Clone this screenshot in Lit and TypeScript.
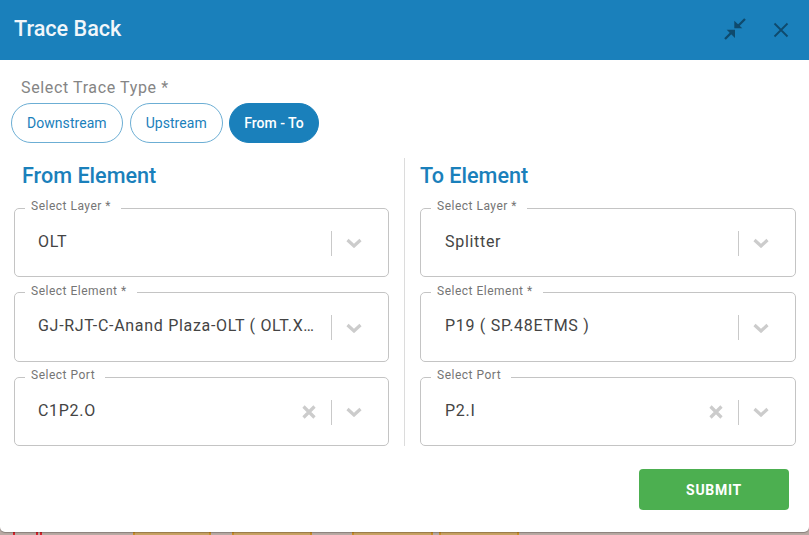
import { LitElement, html, svg, css, nothing } from "lit";
import { customElement } from "lit/decorators.js";

interface Field { label: string; value: string; clear?: boolean; }

const FROM: Field[] = [
  { label: "Select Layer *", value: "OLT" },
  { label: "Select Element *", value: "GJ-RJT-C-Anand Plaza-OLT ( OLT.XGSPON0123 )" },
  { label: "Select Port", value: "C1P2.O", clear: true },
];
const TO: Field[] = [
  { label: "Select Layer *", value: "Splitter" },
  { label: "Select Element *", value: "P19 ( SP.48ETMS )" },
  { label: "Select Port", value: "P2.I", clear: true },
];

const BLOCKS = [[133, 211], [232, 312], [352, 433], [439, 519]];

@customElement("app-root")
export class AppRoot extends LitElement {
  static styles = css`
    :host {
      display: block;
      width: 809px;
      height: 535px;
      overflow: hidden;
      position: relative;
      background: #b9aaa4;
      font-family: Roboto, "Liberation Sans", sans-serif;
    }
    .map { position: absolute; left: 0; right: 0; bottom: 0; height: 3px; display: block; }
    .dialog {
      position: relative;
      height: 532px;
      box-sizing: border-box;
      background: #fff;
      border-radius: 0 0 5px 5px;
      display: flex;
      flex-direction: column;
      box-shadow: 0 1px 1px rgba(0,0,0,.25);
    }
    .head {
      height: 60px;
      flex: none;
      background: #1a80bb;
      display: flex;
      align-items: center;
      padding: 0 20px 0 14px;
    }
    .title { flex: 1; color: #f1f6fa; font-size: 21.6px; font-weight: 500; position: relative; top: -2px; }
    .head svg { display: block; }
    .compress { margin-right: 26px; position: relative; top: -1px; }
    .type-label {
      margin: 18px 0 0 21px;
      font-size: 16px;
      line-height: 19px;
      letter-spacing: .63px;
      color: #858585;
    }
    .pills { display: flex; gap: 7px; margin: 6px 0 0 11px; }
    .pill {
      box-sizing: border-box;
      height: 40px;
      border-radius: 20px;
      border: 1px solid #6caed4;
      background: #fff;
      color: #1a80bb;
      font: 400 14px Roboto, sans-serif;
      letter-spacing: .05px;
      padding: 0 15px;
    }
    .pill.on {
      background: #1a80bb;
      border-color: #1a80bb;
      color: #fff;
      font-weight: 500;
      letter-spacing: 0;
      padding: 0 14.5px;
      margin-left: -1px;
    }
    .cols { display: flex; margin-top: 15px; padding: 0 13px 0 14px; }
    .col { width: 375px; flex: none; }
    .col.right { width: 376px; }
    .rule { width: 1px; background: #dcdcdc; margin: 0 15px; flex: none; height: 288px; }
    .col-title {
      margin: 5px 0 0 8px;
      font-size: 21.6px;
      line-height: 25px;
      font-weight: 500;
      color: #1a80bb;
    }
    .right .col-title { margin-left: 0; }
    .fields { display: flex; flex-direction: column; gap: 8.5px; margin-top: 13px; }
    .field {
      margin: 0;
      min-width: 0;
      box-sizing: border-box;
      height: 76px;
      padding: 0;
      border: 1px solid #c4c4c4;
      border-radius: 5px;
    }
    .field legend {
      margin-left: 10px;
      padding: 0 10px 0 6px;
      font-size: 12px;
      line-height: 14px;
      letter-spacing: .5px;
      color: #757575;
      position: relative;
      top: -2px;
    }
    .inner { display: flex; align-items: center; height: 56px; padding: 0 0 0 23px; }
    .right .inner { padding-left: 24px; }
    .value {
      flex: 1;
      min-width: 0;
      margin-right: 14px;
      white-space: nowrap;
      overflow: hidden;
      text-overflow: ellipsis;
      font-size: 16px;
      letter-spacing: .7px;
      color: #444;
      position: relative;
      top: -2px;
    }
    .x { margin-right: 15px; flex: none; }
    .sep { width: 1px; height: 25px; background: #c9c9c9; flex: none; }
    .chev { flex: none; margin: 0 26px 0 14px; }
    .foot { display: flex; justify-content: flex-end; padding: 23px 20px 0 0; }
    .submit {
      width: 150px;
      height: 41px;
      border: 0;
      border-radius: 4px;
      background: #4caf50;
      color: #fff;
      font: 700 14px Roboto, sans-serif;
      letter-spacing: .7px;
    }
  `;

  private field(f: Field) {
    return html`<fieldset class="field">
      <legend>${f.label}</legend>
      <div class="inner">
        <div class="value">${f.value}</div>
        ${f.clear
          ? html`<svg class="x" width="14" height="14" viewBox="0 0 14 14"><path d="M1.500 1.500l11 11M12.500 1.500l-11 11" stroke="#cccccc" stroke-width="3.200" fill="none"/></svg>`
          : nothing}
        <div class="sep"></div>
        <svg class="chev" width="16" height="10" viewBox="0 0 16 10"><path d="M1.500 2l6.500 6 6.500-6" stroke="#cccccc" stroke-width="3.200" fill="none"/></svg>
      </div>
    </fieldset>`;
  }

  render() {
    return html`
      <svg class="map" viewBox="0 0 809 3" preserveAspectRatio="none">
        ${BLOCKS.map(
          ([a, b]) => svg`
            <rect x=${a} width=${b - a} height="3" fill="#c8a263" />
            <rect x=${a} width="2" height="3" fill="#c98d28" />
            <rect x=${b - 2} width="2" height="3" fill="#c98d28" />
          `
        )}
        <rect x="13" width="2" height="3" fill="#d2232a" />
        <rect x="36" width="2" height="3" fill="#d2232a" />
        <rect x="40" width="2" height="3" fill="#d2232a" />
      </svg>
      <div class="dialog">
        <div class="head">
          <div class="title">Trace Back</div>
          <svg class="compress" width="24" height="24" viewBox="0 0 24 24">
            <path d="M2 22L9 15M15 9L22 2" stroke="#0f4a6d" stroke-width="2.300" fill="none"/>
            <path d="M3.700 12.700H12V21zM11.300 3.700V11.300H19.300z" fill="#0f4a6d"/>
          </svg>
          <svg width="16" height="16" viewBox="0 0 16 16"><path d="M1.500 1.500l13 13M14.500 1.500l-13 13" stroke="#0f4a6d" stroke-width="1.800" fill="none"/></svg>
        </div>
        <div class="type-label">Select Trace Type *</div>
        <div class="pills">
          <button class="pill">Downstream</button>
          <button class="pill">Upstream</button>
          <button class="pill on">From - To</button>
        </div>
        <div class="cols">
          <div class="col">
            <div class="col-title">From Element</div>
            <div class="fields">${FROM.map((f) => this.field(f))}</div>
          </div>
          <div class="rule"></div>
          <div class="col right">
            <div class="col-title">To Element</div>
            <div class="fields">${TO.map((f) => this.field(f))}</div>
          </div>
        </div>
        <div class="foot"><button class="submit">SUBMIT</button></div>
      </div>
    `;
  }
}
